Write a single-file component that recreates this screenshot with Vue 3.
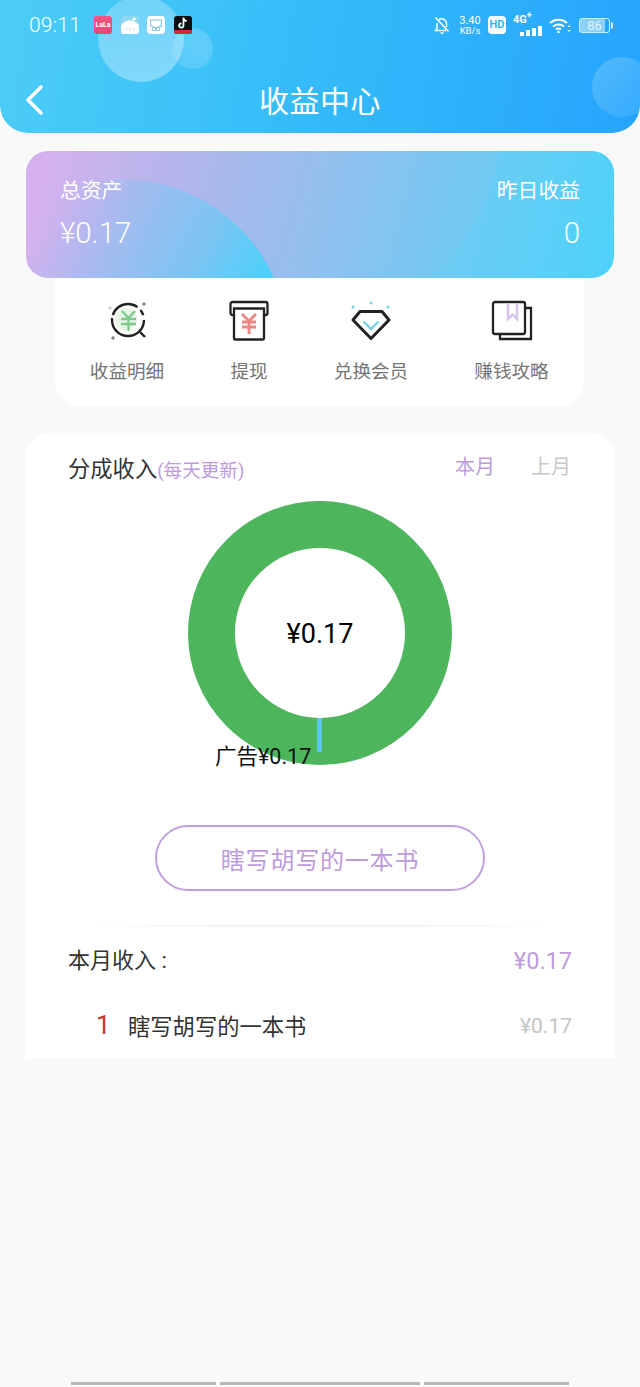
<script setup>
const menus = [
  { key: 'detail', label: '收益明细' },
  { key: 'cash', label: '提现' },
  { key: 'vip', label: '兑换会员' },
  { key: 'guide', label: '赚钱攻略' },
]
const signal = [4, 6, 8, 10]
</script>

<template>
  <div class="page">
    <header class="header">
      <i class="bubble big"></i>
      <i class="bubble small"></i>
      <i class="bubble side"></i>

      <div class="status">
        <span class="time">09:11</span>
        <div class="apps">
          <span class="app lala">LaLa</span>
          <span class="app cloud">
            <svg viewBox="0 0 18 18" width="18" height="18">
              <path d="M0 18V11a9 6.500 0 0 1 18 0v7z" fill="#fff" />
              <circle cx="13" cy="3" r="1.600" fill="#fff" />
              <path d="M5 14l1.500-2M9 15v-3M12 12l1.500 2" stroke="#bdd6e6" stroke-width="1" />
            </svg>
          </span>
          <span class="app mask">
            <svg viewBox="0 0 18 18" width="18" height="18">
              <path d="M3.500 4h11v5c0 1-1 2-3 2l-2.500 1-2.500-1c-2 0-3-1-3-2z" fill="none" stroke="#8cc4dd" stroke-width="1.200" />
              <circle cx="7" cy="13" r="1.800" fill="none" stroke="#8cc4dd" stroke-width="1.100" />
              <circle cx="11" cy="13" r="1.800" fill="none" stroke="#8cc4dd" stroke-width="1.100" />
            </svg>
          </span>
          <span class="app tiktok">
            <svg viewBox="0 0 18 18" width="18" height="18">
              <path d="M9.500 1.500v8a2.200 2.200 0 1 1-2-2.200M9.500 2a3.400 3.400 0 0 0 3.200 3" fill="none" stroke="#fff" stroke-width="1.800" />
            </svg>
            <b></b>
          </span>
        </div>
        <div class="sys">
          <svg class="bell" viewBox="0 0 16 18" width="16" height="18">
            <path d="M3 7v6l-1.500 1.500H12M5 3.500a5 5 0 0 1 7.500 3.500v4M6.500 17h3M1.500 1.500l13 14" fill="none" stroke="#fff" stroke-width="1.500" />
          </svg>
          <div class="speed"><span>3.40</span><span>KB/s</span></div>
          <span class="hd">HD</span>
          <div class="net">
            <span>4G<sup>+</sup></span>
            <div class="bars"><i v-for="h in signal" :key="h" :style="{ height: h + 'px' }"></i></div>
          </div>
          <svg class="wifi" viewBox="0 0 22 16" width="22" height="16">
            <path d="M1 6a13 13 0 0 1 17 0M4 9.500a8.500 8.500 0 0 1 11 0M7 12.500a4 4 0 0 1 5 0" fill="none" stroke="#fff" stroke-width="2" />
            <circle cx="9.500" cy="15" r="1.300" fill="#fff" />
            <path d="M20 8l1.500 2h-3zM20 15l1.500-2h-3z" fill="#fff" />
          </svg>
          <div class="battery"><span>86</span></div>
        </div>
      </div>

      <div class="nav">
        <svg class="back" viewBox="0 0 20 32" width="20" height="32">
          <path d="M17 3L4 16l13 13" fill="none" stroke="#fff" stroke-width="3.500" stroke-linecap="round" stroke-linejoin="round" />
        </svg>
        <h1>收益中心</h1>
      </div>
    </header>

    <section class="assets">
      <i class="wave right"></i>
      <i class="wave left"></i>
      <div class="col">
        <span class="cap">总资产</span>
        <span class="amt">¥0.17</span>
      </div>
      <div class="col end">
        <span class="cap">昨日收益</span>
        <span class="amt">0</span>
      </div>
    </section>

    <nav class="menu">
      <div v-for="m in menus" :key="m.key" class="menu-item">
        <svg v-if="m.key === 'detail'" viewBox="0 0 42 42" width="42" height="42">
          <circle cx="20" cy="20" r="11" fill="#e6f5e8" />
          <circle cx="22" cy="21" r="16" fill="none" stroke="#222" stroke-width="2.400" stroke-dasharray="52 3 30 4 6 5" />
          <path d="M34 33l5 5" stroke="#222" stroke-width="2.400" />
          <path d="M16 12l6.500 7 6.500-7M15 20h15M15 25h15M22.500 19v13" fill="none" stroke="#7ec98a" stroke-width="2.300" />
          <path d="M38 3v4M36 5h4M7 37v4M5 39h4" stroke="#444" stroke-width=".8" />
          <path d="M4 7v4M2 9h4" stroke="#bbb" stroke-width=".8" />
        </svg>
        <svg v-else-if="m.key === 'cash'" viewBox="0 0 42 42" width="42" height="42">
          <path d="M6 16H4.500a2 2 0 0 1-2-2V5a2 2 0 0 1 2-2h33a2 2 0 0 1 2 2v9a2 2 0 0 1-2 2H36" fill="none" stroke="#222" stroke-width="2.300" />
          <path d="M6 9.500h30V39a1.500 1.500 0 0 1-1.500 1.500h-27A1.500 1.500 0 0 1 6 39z" fill="#fff" stroke="#222" stroke-width="2.300" />
          <path d="M14 15l7 7 7-7M14 23h14M14 28h14M21 22v13" fill="none" stroke="#f08585" stroke-width="2.800" />
        </svg>
        <svg v-else-if="m.key === 'vip'" viewBox="0 0 42 42" width="42" height="42">
          <circle cx="3" cy="8" r="1.500" fill="#72d3e6" />
          <circle cx="21" cy="4" r="1.500" fill="#72d3e6" />
          <circle cx="38" cy="8" r="1.500" fill="#72d3e6" />
          <path d="M10 12.500h22l7 8.500-18 18.500L3 21z" fill="none" stroke="#222" stroke-width="3" stroke-linejoin="round" />
          <path d="M13.500 22.500l7.500 7.500 7.500-7.500" fill="none" stroke="#72d3e6" stroke-width="2.400" />
        </svg>
        <svg v-else viewBox="0 0 42 42" width="42" height="42">
          <path d="M9 35v5h31V9h-6" fill="none" stroke="#222" stroke-width="2.300" />
          <rect x="2" y="3" width="32" height="32" rx="2" fill="#fff" stroke="#222" stroke-width="2.300" />
          <path d="M17 4v16l4.500-4.500L26 20V4" fill="none" stroke="#d9c5ec" stroke-width="2.600" />
        </svg>
        <span>{{ m.label }}</span>
      </div>
    </nav>

    <section class="panel">
      <div class="panel-head">
        <div class="title">分成收入<small>(每天更新)</small></div>
        <div class="tabs">
          <span class="on">本月</span>
          <span>上月</span>
        </div>
      </div>

      <div class="chart">
        <svg viewBox="0 0 264 264" width="264" height="264">
          <circle cx="132" cy="132" r="108.500" fill="none" stroke="#4db55c" stroke-width="47" />
          <rect x="129" y="217" width="5" height="34" fill="#5fc8e4" />
        </svg>
        <span class="center">¥0.17</span>
        <span class="label">广告¥0.17</span>
      </div>

      <button class="book">瞎写胡写的一本书</button>
      <div class="rule"></div>

      <div class="row total">
        <span>本月收入 :</span>
        <span class="purple">¥0.17</span>
      </div>
      <div class="row item">
        <div class="name"><b>1</b><span>瞎写胡写的一本书</span></div>
        <span class="grey">¥0.17</span>
      </div>
    </section>

    <div class="home-bar">
      <i class="short"></i>
      <i class="long"></i>
      <i class="short"></i>
    </div>
  </div>
</template>

<style>
html,
body {
  margin: 0;
  background: #f9f9f9;
}
</style>

<style scoped>
.page {
  width: 640px;
  height: 1387px;
  display: flex;
  flex-direction: column;
  overflow: hidden;
  background: #f9f9f9;
  font-family: Roboto, "Noto Sans CJK SC", sans-serif;
}

.header {
  position: relative;
  height: 133px;
  flex: none;
  overflow: hidden;
  border-radius: 0 0 28px 28px;
  background: linear-gradient(100deg, #4dcdf6 0%, #36bdf9 45%, #25a4fd 100%);
  color: #fff;
}

.bubble {
  position: absolute;
  border-radius: 50%;
}

.bubble.big {
  left: 98px;
  top: -4px;
  width: 86px;
  height: 86px;
  background: linear-gradient(160deg, rgba(255, 255, 255, 0.22), rgba(255, 255, 255, 0.36));
}

.bubble.small {
  left: 172px;
  top: 28px;
  width: 41px;
  height: 41px;
  background: radial-gradient(circle at 70% 40%, rgba(255, 255, 255, 0.2), rgba(255, 255, 255, 0.1));
}

.bubble.side {
  left: 592px;
  top: 57px;
  width: 60px;
  height: 60px;
  background: linear-gradient(135deg, rgba(255, 255, 255, 0.2), rgba(255, 255, 255, 0.06));
}

.status {
  position: relative;
  height: 50px;
  padding: 0 28px 0 29px;
  display: flex;
  align-items: center;
}

.time {
  font-size: 21px;
  font-weight: 300;
  letter-spacing: 0.2px;
}

.apps {
  display: flex;
  gap: 8.500px;
  margin-left: 13px;
}

.app {
  width: 18px;
  height: 18px;
  border-radius: 3px;
  overflow: hidden;
  display: flex;
  align-items: center;
  justify-content: center;
  position: relative;
}

.lala {
  background: linear-gradient(180deg, #f2557f, #e8467c);
  font-size: 7px;
  font-weight: 700;
}

.cloud {
  background: #8fd8f2;
}

.mask {
  background: #fff;
  border-radius: 4px;
}

.tiktok {
  background: #0c0c10;
}

.tiktok b {
  position: absolute;
  left: 0;
  right: 0;
  bottom: 0;
  height: 4px;
  background: #d8263f;
}

.sys {
  margin-left: auto;
  display: flex;
  align-items: center;
}

.bell {
  margin-right: 8px;
}

.speed {
  width: 24px;
  display: flex;
  flex-direction: column;
  align-items: center;
  font-size: 11px;
  line-height: 11px;
  margin-right: 6px;
}

.speed span:last-child {
  font-size: 9.500px;
  line-height: 10px;
}

.hd {
  width: 18px;
  height: 18px;
  border-radius: 4px;
  background: #fff;
  color: #31b3fa;
  font-size: 11px;
  font-weight: 700;
  line-height: 18px;
  text-align: center;
  margin-right: 7px;
}

.net {
  width: 29px;
  height: 20px;
  position: relative;
  margin-right: 7px;
  font-size: 11px;
  font-weight: 700;
  line-height: 10px;
}

.net sup {
  font-size: 9px;
  line-height: 0;
}

.bars {
  position: absolute;
  right: 0;
  bottom: -1px;
  display: flex;
  align-items: flex-end;
  gap: 2px;
}

.bars i {
  width: 4px;
  background: #fff;
}

.wifi {
  margin-right: 8px;
}

.battery {
  width: 29px;
  height: 13px;
  border: 1.500px solid #cdeeff;
  border-radius: 3px;
  position: relative;
  background: linear-gradient(90deg, #8ccff8 86%, transparent 86%);
  color: #dff4ff;
  font-size: 13px;
  line-height: 13px;
  text-align: center;
  margin-right: 2px;
}

.battery::after {
  content: '';
  position: absolute;
  right: -4px;
  top: 3px;
  width: 2px;
  height: 7px;
  background: #cdeeff;
  border-radius: 0 2px 2px 0;
}

.nav {
  position: relative;
  height: 60px;
  margin-top: 19px;
  display: flex;
  align-items: center;
  justify-content: center;
}

.back {
  position: absolute;
  left: 24px;
  top: 15px;
}

.nav h1 {
  margin: 0;
  font-size: 30px;
  font-weight: 400;
  letter-spacing: 0.5px;
}

.assets {
  position: relative;
  margin: 18px 26px 0;
  height: 127px;
  padding: 26px 34px 0;
  box-sizing: border-box;
  flex: none;
  overflow: hidden;
  border-radius: 22px;
  display: flex;
  justify-content: space-between;
  background: linear-gradient(105deg, #d4b1ee 4%, #a9b9ec 32%, #70cbf3 70%, #4cd2f9 100%);
  color: #fff;
}

.wave {
  position: absolute;
  border-radius: 50%;
}

.wave.left {
  left: -70px;
  top: 28px;
  width: 332px;
  height: 332px;
  background: linear-gradient(120deg, rgba(110, 200, 245, 0) 22%, rgba(110, 200, 245, 0.75) 55%, #45d2fa 72%);
}

.wave.right {
  left: 94px;
  top: -211px;
  width: 380px;
  height: 380px;
  background: rgba(190, 175, 235, 0.1);
}

.col {
  position: relative;
  display: flex;
  flex-direction: column;
  gap: 8px;
}

.col.end {
  align-items: flex-end;
}

.cap {
  font-size: 20.800px;
  line-height: 28px;
}

.amt {
  font-size: 29.500px;
  font-weight: 300;
  line-height: 40px;
}

.menu {
  margin: 0 56px 0 55px;
  height: 128px;
  box-sizing: border-box;
  padding-top: 21px;
  flex: none;
  display: grid;
  grid-template-columns: 144px 100px 144px 137px;
  background: #fff;
  border-radius: 0 0 24px 24px;
}

.menu-item {
  display: flex;
  flex-direction: column;
  align-items: center;
  gap: 18px;
  color: #757575;
  font-size: 18.600px;
  line-height: 26px;
}

.panel {
  margin: 27px 25px 0 26px;
  height: 625px;
  flex: none;
  overflow: hidden;
  background: #fff;
  border-radius: 24px 24px 0 0;
  padding: 0 43px 0 42px;
  box-sizing: border-box;
}

.panel-head {
  height: 68px;
  display: flex;
  justify-content: space-between;
  align-items: center;
  padding-right: 1px;
}

.title {
  color: #333;
  font-size: 22.300px;
  display: flex;
  align-items: baseline;
}

.title small {
  color: #bd9bdc;
  font-size: 18.600px;
}

.tabs {
  display: flex;
  gap: 36px;
  margin-top: -4px;
  color: #c8c8c8;
  font-size: 20px;
}

.tabs .on {
  color: #bd9bdc;
}

.chart {
  position: relative;
  width: 264px;
  height: 264px;
  margin: 0 auto;
}

.chart svg {
  display: block;
}

.center {
  position: absolute;
  inset: 2px 0 0;
  display: flex;
  align-items: center;
  justify-content: center;
  color: #000;
  font-size: 27px;
}

.label {
  position: absolute;
  left: 27px;
  top: 242px;
  color: #111;
  font-size: 21.500px;
  line-height: 28px;
  white-space: nowrap;
}

.book {
  display: block;
  width: 330px;
  height: 66px;
  margin: 60px auto 0;
  border: 2px solid #c39fdf;
  border-radius: 33px;
  background: #fff;
  color: #bd9bdc;
  font-family: inherit;
  font-size: 24px;
  letter-spacing: 0.8px;
}

.rule {
  height: 2px;
  margin: 34px 20px 0;
  background: linear-gradient(90deg, #fff, #f3f3f3 30%, #f3f3f3 70%, #fff);
}

.row {
  display: flex;
  justify-content: space-between;
  align-items: center;
}

.total {
  height: 66px;
  margin-top: -2px;
  color: #333;
  font-size: 22px;
}

.purple {
  color: #bd9bdc;
  font-size: 23.500px;
  padding-top: 6px;
}

.item {
  height: 66px;
  margin-top: 1px;
}

.name {
  display: flex;
  align-items: center;
  padding-left: 28px;
  color: #333;
  font-size: 22.300px;
}

.name b {
  width: 32px;
  color: #c23a22;
  font-size: 26px;
  font-weight: 400;
}

.grey {
  color: #c4c4c4;
  font-size: 21px;
  padding-top: 2px;
}

.home-bar {
  margin-top: auto;
  margin-bottom: 2px;
  display: flex;
  justify-content: center;
  gap: 4px;
}

.home-bar i {
  height: 3px;
  background: #b8b8b8;
}

.home-bar .short {
  width: 145px;
}

.home-bar .long {
  width: 200px;
}
</style>
